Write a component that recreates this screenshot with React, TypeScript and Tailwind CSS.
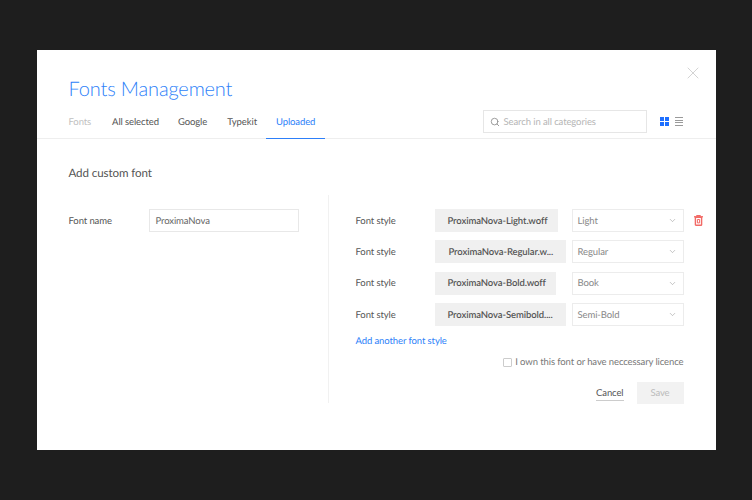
import { ChevronDown, Search, X } from "lucide-react"

const font = "font-['Lato','Open_Sans',sans-serif] [text-rendering:geometricPrecision] text-[9.5px] tracking-[-0.1px]"

const styles = [
  { file: "ProximaNova-Light.woff", value: "Light", width: "w-[123px]", pad: "pl-[13px]", trash: true },
  { file: "ProximaNova-Regular.w...", value: "Regular", width: "w-[131px]", pad: "pl-[14px]", trash: false },
  { file: "ProximaNova-Bold.woff", value: "Book", width: "w-[121px]", pad: "pl-[13px]", trash: false },
  { file: "ProximaNova-Semibold....", value: "Semi-Bold", width: "w-[131px]", pad: "pl-[13px]", trash: false },
]

function TrashIcon() {
  return (
    <svg width="9" height="11" viewBox="0 0 9 11" fill="none" stroke="#f26a66" strokeWidth="1.4">
      <path d="M0 1.8h9" />
      <path d="M3 1.5V.6h3v.9" />
      <rect x="1.4" y="2.4" width="6.2" height="7.9" rx=".6" />
      <path d="M3.4 4.5h2.2v3.4H3.4z" strokeWidth="1" />
    </svg>
  )
}

function GridIcon() {
  return (
    <div className="grid grid-cols-2 gap-[1px]">
      <div className="h-[4px] w-[4px] bg-[#1e6fff]" />
      <div className="h-[4px] w-[4px] bg-[#1e6fff]" />
      <div className="h-[4px] w-[4px] bg-[#1e6fff]" />
      <div className="h-[4px] w-[4px] bg-[#1e6fff]" />
    </div>
  )
}

function ListIcon() {
  return (
    <div className="flex w-[8px] flex-col gap-[1.4px]">
      <div className="h-px w-[8px] bg-[#9a9a9a]" />
      <div className="h-px w-[8px] bg-[#9a9a9a]" />
      <div className="h-px w-[8px] bg-[#9a9a9a]" />
      <div className="h-px w-[8px] bg-[#9a9a9a]" />
    </div>
  )
}

function StyleRow({ row }: { row: (typeof styles)[number] }) {
  return (
    <div className="flex h-[23px] items-center">
      <span className="w-[79px] pt-[3px] text-[#555]">Font style</span>
      <div className={`flex h-[23px] items-center bg-[#f0f0f0] pt-[3px] font-semibold text-[#555] ${row.width} ${row.pad}`}>
        <span className="whitespace-nowrap">{row.file}</span>
      </div>
      <div className="ml-auto flex h-[23px] w-[112px] items-center justify-between border border-[#ececec] pl-[5px] pr-[6px] text-[#888]">
        <span className="pt-[3px]">{row.value}</span>
        <ChevronDown size={9} color="#999" strokeWidth={1.5} />
      </div>
    </div>
  )
}

export default function App() {
  return (
    <div className={`flex h-[500px] w-[752px] items-center justify-center bg-[#1e1e1e] ${font}`}>
      <div className="relative flex h-[400px] w-[679px] flex-col bg-white">
        <button className="absolute right-[13px] top-[13px] text-[#bdbdbd]">
          <X size={20} strokeWidth={0.8} />
        </button>

        <div className="border-b border-[#eee] pl-[32px] pr-[33px]">
          <h1 className="pt-[25px] text-[20px] font-light leading-[28px] tracking-[-0.15px] text-[#2d7ff9]">Fonts Management</h1>
          <div className="mt-[2px] flex h-[33px] items-center justify-between">
            <div className="flex h-full items-center text-[#555]">
              <span className="mr-[21px] pt-[3px] text-[#c0c0c0]">Fonts</span>
              <span className="mr-[19px] pt-[3px]">All selected</span>
              <span className="mr-[20px] pt-[3px]">Google</span>
              <span className="mr-[9px] pt-[3px]">Typekit</span>
              <span className="relative flex h-full items-center px-[10px] pt-[3px] text-[#2d7ff9]">
                Uploaded
                <span className="absolute -bottom-px left-0 right-0 h-px bg-[#2d7ff9]" />
              </span>
            </div>
            <div className="flex items-center">
              <div className="flex h-[23px] w-[164px] items-center border border-[#e6e6e6] pl-[6px] text-[#b5b5b5]">
                <Search size={10} color="#8a8a8a" />
                <span className="ml-[4px] pt-[3px]">Search in all categories</span>
              </div>
              <div className="ml-[13px] flex items-center gap-[6px]">
                <GridIcon />
                <ListIcon />
              </div>
            </div>
          </div>
        </div>

        <div className="flex-1 pl-[32px] pr-[32px]">
          <h2 className="mt-[26px] text-[11.6px] leading-[18px] text-[#555]">Add custom font</h2>
          <div className="mt-[26px] flex">
            <div className="flex h-[23px] w-[259px] items-center">
              <span className="w-[80px] pt-[3px] text-[#555]">Font name</span>
              <div className="flex h-[23px] w-[150px] items-center border border-[#e8e8e8] pl-[6px] pt-[3px] text-[#666]">
                ProximaNova
              </div>
            </div>
            <div className="-mt-[14px] h-[208px] border-l border-[#f1f1f1] pl-[27px]">
              <div className="relative mt-[14px] flex w-[328px] flex-col gap-[8.3px]">
                {styles.map((row) => (
                  <div key={row.value} className="relative">
                    <StyleRow row={row} />
                    {row.trash && (
                      <div className="absolute -right-[19px] top-[6px]">
                        <TrashIcon />
                      </div>
                    )}
                  </div>
                ))}
              </div>
              <div className="mt-[9px] leading-[14px] text-[#2d7ff9]">Add another font style</div>
              <div className="mt-[7px] flex w-[328px] items-center justify-end leading-[14px] text-[#777]">
                <span className="mr-[3px] h-[9px] w-[9px] rounded-[1px] border border-[#ccc]" />
                I own this font or have neccessary licence
              </div>
              <div className="mt-[12px] flex w-[328px] items-center justify-end">
                <span className="mr-[13px] mt-[4px] border-b border-[#ccc] leading-[12px] text-[#555]">Cancel</span>
                <div className="flex h-[22px] w-[47px] items-center justify-center bg-[#f2f2f2] pt-[2px] text-[#bbb]">Save</div>
              </div>
            </div>
          </div>
        </div>
      </div>
    </div>
  )
}
